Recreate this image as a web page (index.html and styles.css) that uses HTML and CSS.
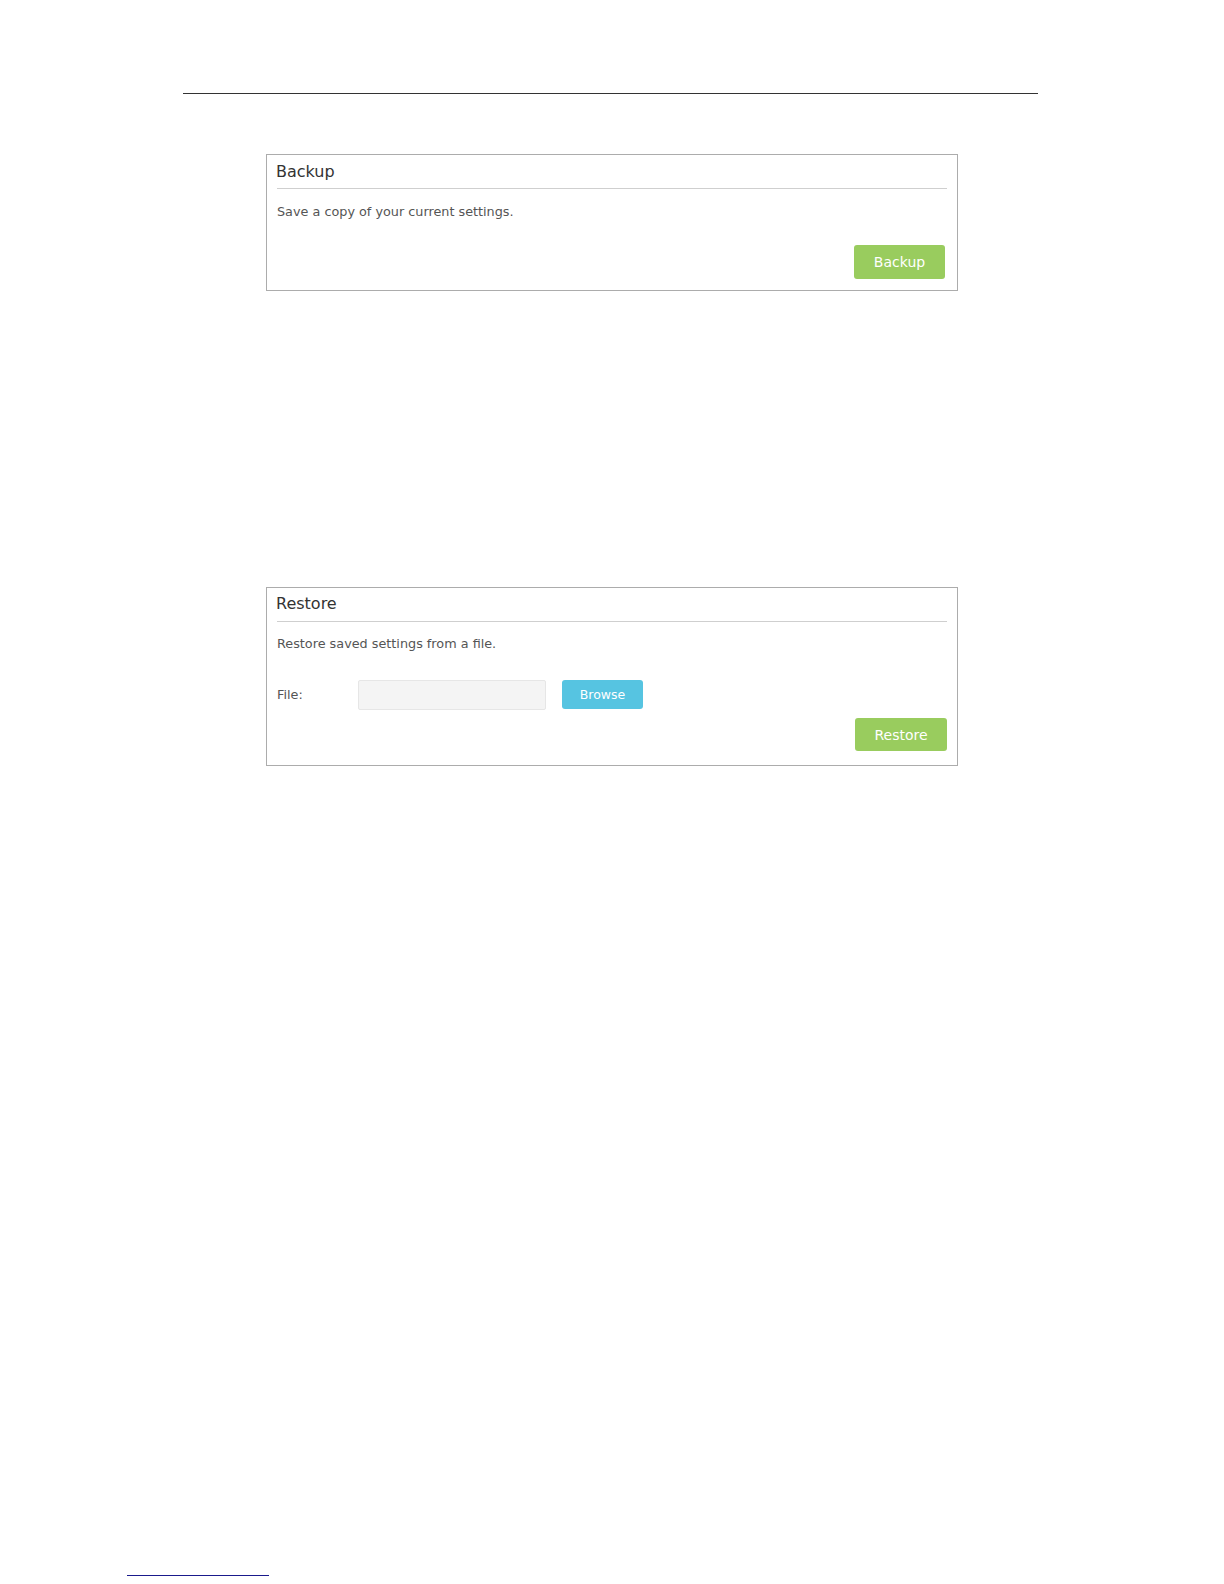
FILE: index.html
```html
<!DOCTYPE html>
<html>
<head>
<meta charset="utf-8">
<link rel="stylesheet" href="styles.css">
</head>
<body>
<div class="page">
  <div class="header-rule"></div>
  <section class="panel panel-backup">
    <h2 class="panel-title">Backup</h2>
    <p class="panel-desc">Save a copy of your current settings.</p>
    <div class="panel-actions">
      <button class="btn btn-green">Backup</button>
    </div>
  </section>
  <section class="panel panel-restore">
    <h2 class="panel-title">Restore</h2>
    <p class="panel-desc">Restore saved settings from a file.</p>
    <div class="file-row">
      <span class="file-label">File:</span>
      <span class="file-input"></span>
      <button class="btn btn-blue">Browse</button>
    </div>
    <div class="panel-actions restore-actions">
      <button class="btn btn-green">Restore</button>
    </div>
  </section>
  <div class="footer">
    <div class="footnote-rule"></div>
  </div>
</div>
</body>
</html>
```
FILE: styles.css
```css
html, body {
  margin: 0;
  padding: 0;
  background: #ffffff;
}
body {
  font-family: "DejaVu Sans", "Liberation Sans", sans-serif;
  width: 1224px;
  height: 1584px;
  overflow: hidden;
}
.page {
  padding-top: 93px;
  display: flex;
  flex-direction: column;
}
.header-rule {
  margin-left: 183px;
  width: 855px;
  height: 0;
  border-top: 1.5px solid #333333;
}
.panel {
  margin-left: 266px;
  width: 670px;
  border: 1px solid #acacac;
  padding: 0 10px;
  box-sizing: content-box;
}
.panel-backup {
  margin-top: 60px;
  padding-bottom: 11px;
}
.panel-restore {
  margin-top: 296px;
  padding-bottom: 14px;
}
.panel-title {
  margin: 0;
  font-weight: normal;
  font-size: 16px;
  line-height: 22px;
  color: #333333;
  border-bottom: 1px solid #cfcfcf;
  text-indent: -1px;
}
.panel-backup .panel-title {
  padding: 6px 0 5px 0;
}
.panel-restore .panel-title {
  padding: 5px 0 6px 0;
}
.panel-desc {
  margin: 13px 0 0 0;
  font-size: 12.8px;
  line-height: 18px;
  color: #555555;
}
.panel-backup .panel-desc {
  margin-top: 14px;
}
.panel-actions {
  display: flex;
  justify-content: flex-end;
}
.panel-backup .panel-actions {
  margin-top: 24px;
  padding-right: 2px;
}
.restore-actions {
  margin-top: 8px;
}
.btn {
  border: none;
  border-radius: 3px;
  color: #ffffff;
  font-family: "DejaVu Sans", "Liberation Sans", sans-serif;
  padding: 0;
  cursor: pointer;
}
.btn-green {
  background: #99cc5e;
  width: 91px;
  height: 34px;
  font-size: 14px;
}
.restore-actions .btn-green {
  width: 92px;
  height: 33px;
}
.btn-blue {
  background: #56c4e1;
  width: 81px;
  height: 29px;
  font-size: 12.5px;
  margin-left: 16px;
}
.file-row {
  margin-top: 27px;
  display: flex;
  align-items: flex-start;
}
.file-label {
  width: 81px;
  font-size: 12.8px;
  line-height: 30px;
  color: #555555;
}
.file-input {
  display: block;
  width: 186px;
  height: 28px;
  background: #f4f4f4;
  border: 1px solid #e6e6e6;
  border-radius: 2px;
}
.footer {
  margin-top: 809px;
}
.footnote-rule {
  margin-left: 127px;
  width: 142px;
  border-top: 1.5px solid #1a1a8c;
}
```
